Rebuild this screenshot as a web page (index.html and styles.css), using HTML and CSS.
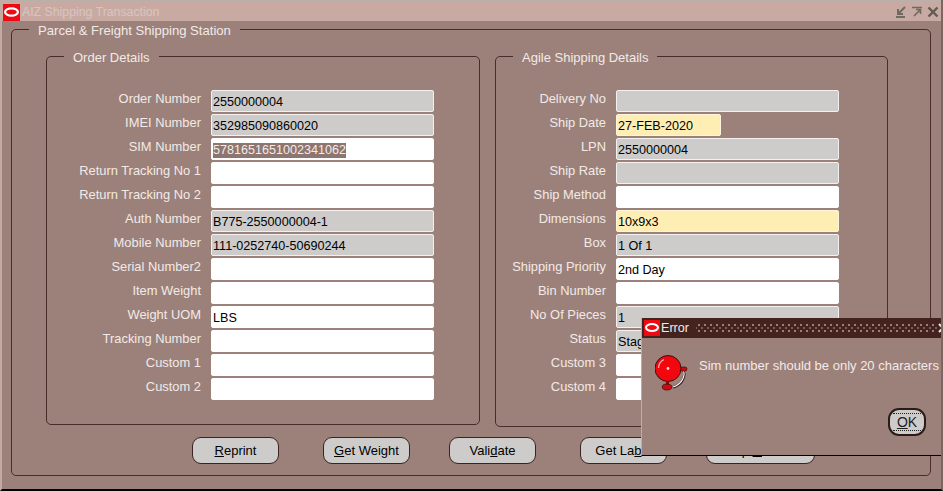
FILE: index.html
```html
<!DOCTYPE html>
<html lang="en">
<head>
<meta charset="utf-8">
<title>AIZ Shipping Transaction</title>
<link rel="stylesheet" href="styles.css">
</head>
<body>
<div class="window">
  <header class="titlebar">
    <svg class="logo" viewBox="0 0 17 17"><rect width="17" height="17" fill="#ee0a12"/><ellipse cx="8.5" cy="8" rx="6.4" ry="3.7" fill="none" stroke="#fff" stroke-width="2.2"/></svg>
    <span class="title">AIZ Shipping Transaction</span>
    <span class="controls">
      <svg width="12" height="12" viewBox="0 0 12 12"><path d="M10 1 L4 7 M3 3 V8 H8 M1 11 H10" fill="none" stroke="#6f6a62" stroke-width="2"/></svg>
      <svg width="12" height="12" viewBox="0 0 12 12"><path d="M1 1.5 H11 M3 10 L9 4 M5 3.5 H9.5 V8" fill="none" stroke="#6f6a62" stroke-width="1.7"/></svg>
      <svg width="12" height="12" viewBox="0 0 12 12"><path d="M1.5 1.5 L10.5 10.5 M10.5 1.5 L1.5 10.5" fill="none" stroke="#5f5b55" stroke-width="2.4"/></svg>
    </span>
  </header>
  <main class="main">
    <fieldset class="station">
      <legend class="station-legend">Parcel &amp; Freight Shipping Station</legend>
      <div class="panels">
        <fieldset class="panel panel-order">
          <legend class="panel-legend">Order Details</legend>
          <div class="form form-order">
            <label class="lbl">Order Number</label><div class="field ro">2550000004</div>
            <label class="lbl">IMEI Number</label><div class="field ro">352985090860020</div>
            <label class="lbl">SIM Number</label><div class="field"><span class="sel">5781651651002341062</span></div>
            <label class="lbl">Return Tracking No 1</label><div class="field"></div>
            <label class="lbl">Return Tracking No 2</label><div class="field"></div>
            <label class="lbl">Auth Number</label><div class="field ro">B775-2550000004-1</div>
            <label class="lbl">Mobile Number</label><div class="field ro">111-0252740-50690244</div>
            <label class="lbl">Serial Number2</label><div class="field"></div>
            <label class="lbl">Item Weight</label><div class="field"></div>
            <label class="lbl">Weight UOM</label><div class="field">LBS</div>
            <label class="lbl">Tracking Number</label><div class="field"></div>
            <label class="lbl">Custom 1</label><div class="field"></div>
            <label class="lbl">Custom 2</label><div class="field"></div>
          </div>
        </fieldset>
        <fieldset class="panel panel-agile">
          <legend class="panel-legend">Agile Shipping Details</legend>
          <div class="form form-agile">
            <label class="lbl">Delivery No</label><div class="field ro"></div>
            <label class="lbl">Ship Date</label><div class="field req short">27-FEB-2020</div>
            <label class="lbl">LPN</label><div class="field ro">2550000004</div>
            <label class="lbl">Ship Rate</label><div class="field ro"></div>
            <label class="lbl">Ship Method</label><div class="field"></div>
            <label class="lbl">Dimensions</label><div class="field req">10x9x3</div>
            <label class="lbl">Box</label><div class="field ro">1 Of 1</div>
            <label class="lbl">Shipping Priority</label><div class="field">2nd Day</div>
            <label class="lbl">Bin Number</label><div class="field"></div>
            <label class="lbl">No Of Pieces</label><div class="field ro">1</div>
            <label class="lbl">Status</label><div class="field ro">Staged</div>
            <label class="lbl">Custom 3</label><div class="field"></div>
            <label class="lbl">Custom 4</label><div class="field"></div>
          </div>
        </fieldset>
      </div>
      <div class="actions">
        <button class="btn"><u>R</u>eprint</button>
        <button class="btn wide-gap"><u>G</u>et Weight</button>
        <button class="btn">Vali<u>d</u>ate</button>
        <button class="btn wide-gap">Get La<u>b</u>el</button>
        <button class="btn btn-long">Ship <u>C</u>onfirm</button>
      </div>
    </fieldset>
  </main>
  <section class="dialog">
    <header class="dialog-title">
      <svg class="dialog-logo" viewBox="0 0 17 17"><rect width="17" height="17" fill="#ee0a12"/><ellipse cx="8.5" cy="8" rx="6.4" ry="3.7" fill="none" stroke="#fff" stroke-width="2.2"/></svg>
      <span class="dialog-name">Error</span>
      <span class="dots"></span>
      <svg class="dialog-close" width="10" height="10" viewBox="0 0 10 10"><path d="M1 1 L9 9 M9 1 L1 9" fill="none" stroke="#efe6e2" stroke-width="2"/></svg>
    </header>
    <div class="dialog-body">
      <svg class="bell" width="34" height="38" viewBox="0 0 34 38">
        <path d="M28 15 C31 19 29 29 18 32.5" fill="none" stroke="#3a2020" stroke-width="2.4"/>
        <path d="M28 15 C30.5 19 28.5 28.5 18 32" fill="none" stroke="#fff" stroke-width="1.1"/>
        <rect x="25" y="12" width="7" height="4" rx="2" fill="#c80c10" stroke="#401010" stroke-width=".7"/>
        <ellipse cx="12" cy="32" rx="4.8" ry="3" fill="#d00a10" stroke="#401010" stroke-width=".8"/>
        <rect x="11" y="26" width="3" height="4" fill="#7a0a0c"/>
        <circle cx="13" cy="13.5" r="13" fill="#f2070f" stroke="#3a1212" stroke-width="1"/>
        <path d="M3.5 13 A10 10 0 0 1 9 4.5" fill="none" stroke="#ffb0b0" stroke-width="1.2"/>
        <circle cx="13" cy="13.5" r="1.4" fill="#ffd0d0"/>
      </svg>
      <p class="message">Sim number should be only 20 characters</p>
    </div>
    <div class="dialog-actions">
      <button class="ok"><span class="ok-focus"><u>O</u>K</span></button>
    </div>
  </section>
</div>
</body>
</html>
```
FILE: styles.css
```css
* { box-sizing: border-box; }
html, body { margin: 0; padding: 0; height: 100%; overflow: hidden; }
body { font: 13px/15px "Liberation Sans", Arial, sans-serif; color: #000; background: #9c817a; }

.window {
  position: relative;
  width: 943px;
  height: 491px;
  overflow: hidden;
  background: #9c817a;
  border-left: 2px solid #c4aaa3;
  border-bottom: 2px solid #000;
  border-right: 2px solid #7d6660;
}

.titlebar {
  display: flex;
  align-items: center;
  height: 21px;
  margin-left: -2px;
  margin-right: -2px;
  padding: 2px 4px 0 3px;
  background: #c9aaa3;
  border-top: 1px solid #b9b0ac;
}
.logo { width: 17px; height: 17px; flex: none; }
.title { margin-left: 2px; color: #d9c5c0; font-size: 12.3px; }
.controls { display: flex; gap: 4px; margin-left: auto; }

.main { padding: 0 10px 0 9px; }

.station {
  margin: 0;
  width: 920px;
  height: 455px;
  padding: 10px 0 0 34px;
  min-width: 0;
  border: 1px solid #4a2b29;
  border-radius: 5px;
}
.station-legend {
  margin-left: -17px;
  padding: 2px 9px 0;
  font-size: 13.1px;
  color: #f2eae7;
  line-height: 15px;
}

.panels { display: flex; align-items: flex-start; gap: 15px; }

.panel {
  margin: 0;
  padding: 25px 0 0;
  min-width: 0;
  border: 1px solid #4a2b29;
  border-radius: 5px;
}
.panel-order { width: 434px; height: 377px; }
.panel-agile { width: 393px; height: 379px; }
.panel-legend {
  margin-left: 17px;
  padding: 2px 9px 0;
  color: #f2eae7;
  line-height: 15px;
}

.form { display: grid; row-gap: 2px; column-gap: 10px; grid-auto-rows: 22px; align-items: center; }
.form-order { grid-template-columns: 154px 223px; }
.form-agile { grid-template-columns: 110px 223px; }

.lbl { text-align: right; font-size: 12.9px; color: #f2eae7; margin-top: -5px; white-space: nowrap; }

.field {
  height: 22px;
  padding: 2px 0 0 1px;
  font-size: 12.6px;
  background: #fff;
  border: 1px solid #fff;
  border-radius: 2px;
  line-height: 19px;
  white-space: nowrap;
  overflow: hidden;
}
.ro { background: #cdcccb; border-color: #f2f1f0; }
.req { background: #ffeeb4; border-color: #fdf6dc; }
.short { width: 105px; }
.sel { display: inline-block; background: #8f7570; color: #f1ecea; line-height: 15px; }

.actions { display: flex; gap: 39px; margin: 10px 0 0 146px; }
.btn {
  flex: none;
  width: 87px;
  height: 27px;
  padding: 0;
  font: inherit;
  color: #000;
  background: #cdcccb;
  border: 1px solid #3c2322;
  border-radius: 9px;
}
.wide-gap { margin-left: 5px; }
.btn-long { width: 109px; }

.dialog {
  position: absolute;
  left: 639px;
  top: 318px;
  width: 320px;
  height: 138px;
  background: #9c817a;
  border-left: 1px solid #c4aaa3;
  border-bottom: 1px solid #000;
}
.dialog-title {
  display: flex;
  align-items: center;
  height: 20px;
  padding-left: 2px;
  background: #44231f;
}
.dialog-logo { width: 16px; height: 16px; flex: none; }
.dialog-name { margin-left: 1px; width: 28px; color: #f2eae7; font-size: 12.6px; }
.dots {
  width: 241px;
  height: 10px;
  margin-left: 7px;
  background-color: #44231f;
  background-image:
    radial-gradient(circle at center, #b8a29c 0, #b8a29c .6px, transparent 1px),
    radial-gradient(circle at center, #8a706a 0, #8a706a .6px, transparent 1px);
  background-size: 6px 6px;
  background-position: 0 -1px, 3px 2px;
}
.dialog-close { margin-left: 1px; flex: none; }

.dialog-body { display: flex; align-items: flex-start; padding: 17px 0 0 13px; }
.bell { flex: none; }
.message { margin: 0 0 0 10px; color: #f2eae7; line-height: 21px; white-space: nowrap; }

.dialog-actions { position: absolute; left: 246px; top: 90px; }
.ok {
  display: block;
  width: 38px;
  height: 28px;
  padding: 3px;
  font: inherit;
  font-size: 14px;
  color: #222;
  background: #cdcccb;
  border: 2px solid #2a1a18;
  border-radius: 11px;
}
.ok-focus {
  display: block;
  height: 100%;
  line-height: 16px;
  border-top: 1px dotted #222;
  border-bottom: 1px dotted #222;
}
```
